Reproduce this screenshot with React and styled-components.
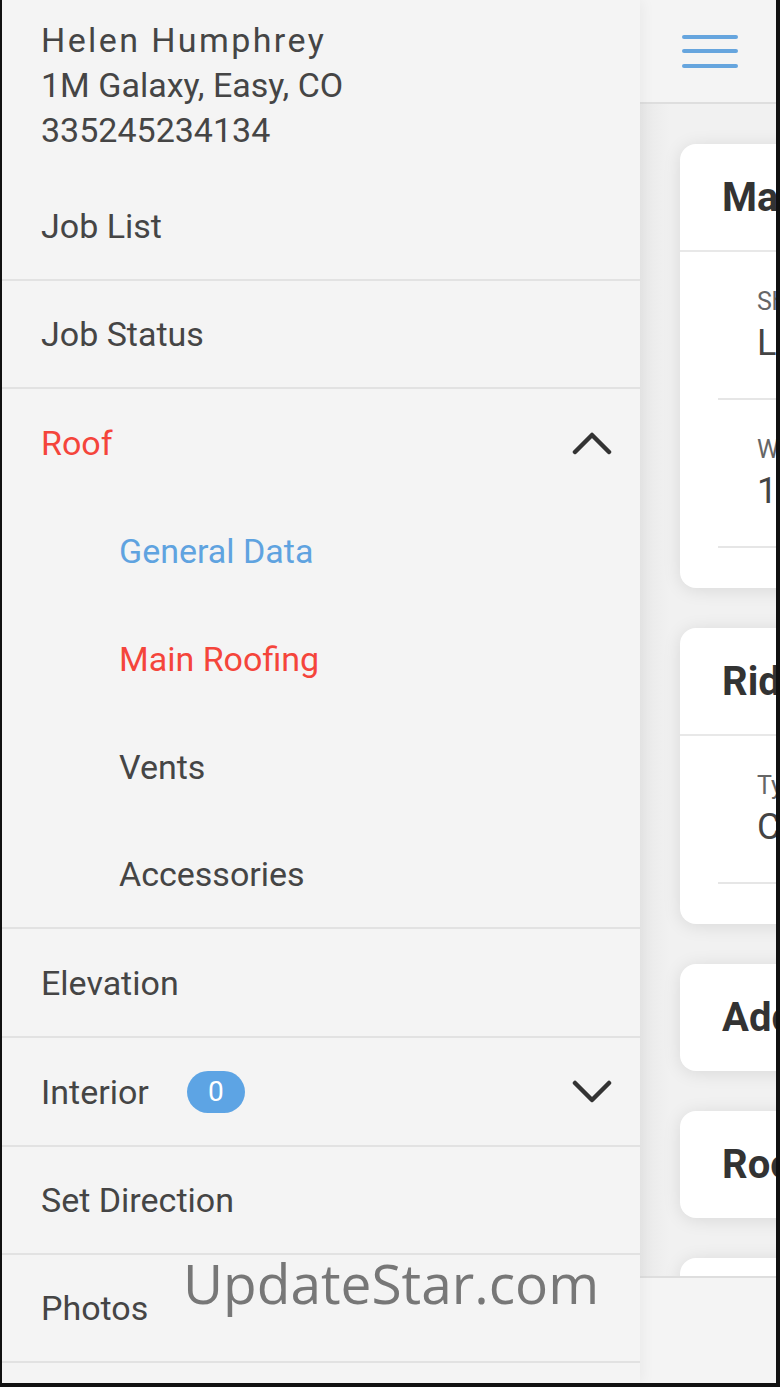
import styled, { createGlobalStyle } from 'styled-components'

const GlobalStyle = createGlobalStyle`
  html, body {
    margin: 0;
    padding: 0;
    background: #000;
  }
  * {
    box-sizing: border-box;
  }
`

const Frame = styled.div`
  display: flex;
  width: 780px;
  height: 1387px;
  border-left: 2px solid #111;
  border-right: 4px solid #111;
  border-bottom: 4px solid #111;
  background: #f4f4f4;
  font-family: Roboto, 'Noto Sans', sans-serif;
  overflow: hidden;
  position: relative;
`

const Sidebar = styled.nav`
  width: 638px;
  flex-shrink: 0;
  display: flex;
  flex-direction: column;
  background: #f4f4f4;
  position: relative;
  z-index: 2;
  box-shadow: 2px 0 14px rgba(0, 0, 0, 0.05);
`

const Profile = styled.div`
  flex-shrink: 0;
  padding: 18px 0 20px 39px;
  color: #454545;
  font-size: 34px;
  line-height: 45px;
`

const Name = styled.div`
  letter-spacing: 2.4px;
`

const MenuRow = styled.div`
  flex-shrink: 0;
  display: flex;
  align-items: center;
  height: ${(p) => (p.$tall ? '109px' : '108px')};
  padding: 0 28px 0 ${(p) => (p.$sub ? '117px' : '39px')};
  border-bottom: ${(p) => (p.$divider ? '2px solid #e2e2e2' : 'none')};
  font-size: 34px;
  color: ${(p) => p.$color || '#454545'};
`

const Label = styled.span`
  flex: 1;
  display: flex;
  align-items: center;
`

const Badge = styled.span`
  display: inline-flex;
  align-items: center;
  justify-content: center;
  width: 58px;
  height: 42px;
  margin-left: 38px;
  border-radius: 21px;
  background: #5da4e4;
  color: #fff;
  font-size: 28px;
`

const Chevron = ({ up }) => (
  <svg width="40" height="24" viewBox="0 0 40 24" fill="none">
    <path
      d={up ? 'M3 21 L20 4 L37 21' : 'M3 3 L20 20 L37 3'}
      stroke="#333"
      strokeWidth="4.5"
      strokeLinecap="round"
      strokeLinejoin="round"
    />
  </svg>
)

const Main = styled.div`
  flex: 1;
  display: flex;
  flex-direction: column;
  min-width: 0;
  background: #efefef;
`

const TopBar = styled.header`
  height: 104px;
  flex-shrink: 0;
  display: flex;
  align-items: flex-start;
  padding: 33px 0 0 42px;
  background: #f4f4f4;
  border-bottom: 2px solid #dedede;
`

const Content = styled.div`
  flex: 1;
  display: flex;
  flex-direction: column;
  gap: 40px;
  padding: 40px 0 0 40px;
  overflow: hidden;
  background: linear-gradient(90deg, #e9e9e9 0px, #f1f1f1 30px, #f1f1f1 100%);
`

const Card = styled.section`
  width: 600px;
  flex-shrink: 0;
  background: #fff;
  border-radius: 16px;
  box-shadow: 0 2px 18px rgba(0, 0, 0, 0.1);
  padding-bottom: ${(p) => (p.$open ? '40px' : '0')};
`

const CardTitle = styled.h2`
  margin: 0;
  height: ${(p) => (p.$open ? '108px' : '107px')};
  display: flex;
  align-items: center;
  padding-left: 42px;
  font-size: 40px;
  font-weight: 700;
  color: #333;
  white-space: nowrap;
  border-bottom: ${(p) => (p.$open ? '2px solid #e8e8e8' : 'none')};
`

const Field = styled.div`
  margin-left: 38px;
  height: 148px;
  display: flex;
  flex-direction: column;
  justify-content: center;
  gap: 6px;
  padding-left: 39px;
  border-bottom: 2px solid #e6e6e6;
`

const FieldName = styled.span`
  font-size: 25px;
  color: #666;
`

const FieldValue = styled.span`
  font-size: 36px;
  color: #444;
`

const BottomBar = styled.footer`
  height: 107px;
  flex-shrink: 0;
  background: #f4f4f4;
  border-top: 2px solid #dedede;
`

const Watermark = styled.div`
  position: absolute;
  left: 181px;
  top: 1245px;
  font-family: 'Open Sans', 'DejaVu Sans', sans-serif;
  font-size: 55px;
  color: #777;
  z-index: 5;
  pointer-events: none;
`

const Hamburger = () => (
  <svg width="60" height="40" viewBox="0 0 60 40">
    {[4, 18, 33].map((y) => (
      <rect key={y} x="0" y={y - 2} width="56" height="4" rx="2" fill="#66a5de" />
    ))}
  </svg>
)

const menu = [
  { label: 'Job List', divider: true },
  { label: 'Job Status', divider: true },
  { label: 'Roof', color: '#f4453b', chevron: 'up' },
  { label: 'General Data', sub: true, color: '#5fa3e0' },
  { label: 'Main Roofing', sub: true, color: '#f4453b' },
  { label: 'Vents', sub: true },
  { label: 'Accessories', sub: true, divider: true },
  { label: 'Elevation', divider: true, tall: true },
  { label: 'Interior', badge: 0, chevron: 'down', divider: true, tall: true },
  { label: 'Set Direction', divider: true },
  { label: 'Photos', divider: true },
  { label: '', divider: true },
]

const cards = [
  {
    title: 'Main Roofing',
    fields: [
      { name: 'Shingle Type', value: 'Laminated' },
      { name: 'Waste %', value: '10' },
    ],
  },
  { title: 'Ridge', fields: [{ name: 'Type', value: 'Cap' }] },
  { title: 'Additional Items', fields: [] },
  { title: 'Roof Pitch', fields: [] },
  { title: 'Notes', fields: [] },
]

export default function App() {
  return (
    <>
      <GlobalStyle />
      <Frame>
        <Sidebar>
          <Profile>
            <Name>Helen Humphrey</Name>
            <div>1M Galaxy, Easy, CO</div>
            <div>335245234134</div>
          </Profile>
          {menu.map((item, i) => (
            <MenuRow
              key={i}
              $sub={item.sub}
              $tall={item.tall}
              $divider={item.divider}
              $color={item.color}
            >
              <Label>
                {item.label}
                {item.badge !== undefined && <Badge>{item.badge}</Badge>}
              </Label>
              {item.chevron && <Chevron up={item.chevron === 'up'} />}
            </MenuRow>
          ))}
        </Sidebar>
        <Main>
          <TopBar>
            <Hamburger />
          </TopBar>
          <Content>
            {cards.map((card) => {
              const open = card.fields.length > 0
              return (
                <Card key={card.title} $open={open}>
                  <CardTitle $open={open}>{card.title}</CardTitle>
                  {card.fields.map((f) => (
                    <Field key={f.name}>
                      <FieldName>{f.name}</FieldName>
                      <FieldValue>{f.value}</FieldValue>
                    </Field>
                  ))}
                </Card>
              )
            })}
          </Content>
          <BottomBar />
        </Main>
        <Watermark>UpdateStar.com</Watermark>
      </Frame>
    </>
  )
}
